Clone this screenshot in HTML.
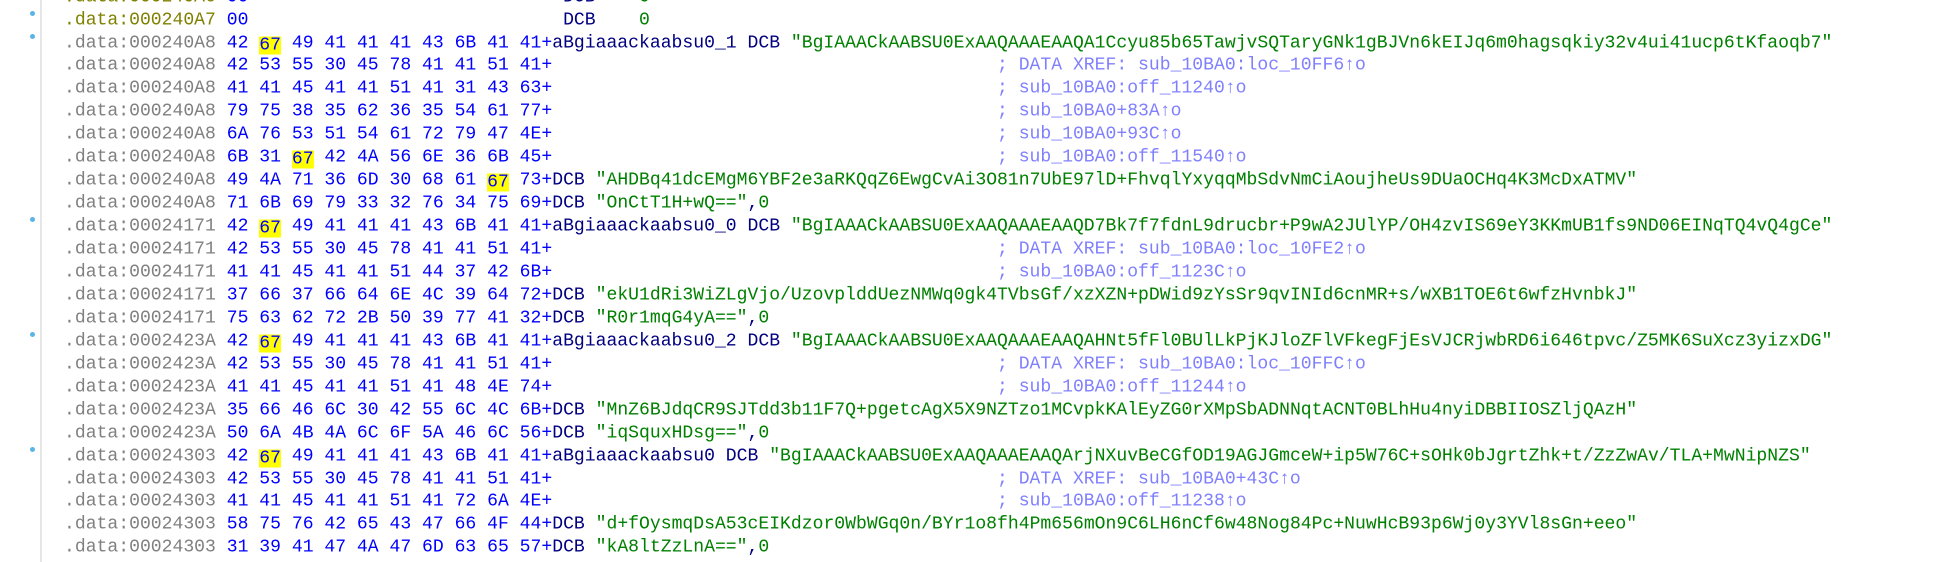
<!DOCTYPE html>
<html><head><meta charset="utf-8"><style>
html,body{margin:0;padding:0;background:#fff;width:1947px;height:562px;overflow:hidden;position:relative}
.g{position:absolute;left:40px;top:0;width:2px;height:562px;background:#e6e6e6}
.l{position:absolute;left:64px;white-space:pre;font-family:"Liberation Mono",monospace;font-size:18.08px;height:23px;line-height:23px;color:#000080;transform:translateY(1.5px)}
.d{position:absolute;left:30px;width:5px;height:5px;border-radius:50%;background:#5ab4e6}
.a{color:#808080}.o{color:#808000}.h{color:#0000ff}.s{color:#008000}.c{color:#8080ff}
.y{background:#ffff00;display:inline-block;line-height:18px;height:18px;vertical-align:-2px}
</style></head><body>
<div class="g"></div>
<div class="l" style="top:-15.5px"><span class="o">.data:000240A6</span> <span class="h">00</span>                             DCB    <span class="s">0</span></div>
<div class="d" style="top:11px"></div>
<div class="l" style="top:7.5px"><span class="o">.data:000240A7</span> <span class="h">00</span>                             DCB    <span class="s">0</span></div>
<div class="d" style="top:33.5px"></div>
<div class="l" style="top:30.5px"><span class="a">.data:000240A8</span> <span class="h">42 <span class="y">67</span> 49 41 41 41 43 6B 41 41+</span>aBgiaaackaabsu0_1 DCB <span class="s">"BgIAAACkAABSU0ExAAQAAAEAAQA1Ccyu85b65TawjvSQTaryGNk1gBJVn6kEIJq6m0hagsqkiy32v4ui41ucp6tKfaoqb7"</span></div>
<div class="l" style="top:53.4px"><span class="a">.data:000240A8</span> <span class="h">42 53 55 30 45 78 41 41 51 41+</span>                                         <span class="c">; DATA XREF: sub_10BA0:loc_10FF6↑o</span></div>
<div class="l" style="top:76.4px"><span class="a">.data:000240A8</span> <span class="h">41 41 45 41 41 51 41 31 43 63+</span>                                         <span class="c">; sub_10BA0:off_11240↑o</span></div>
<div class="l" style="top:99.3px"><span class="a">.data:000240A8</span> <span class="h">79 75 38 35 62 36 35 54 61 77+</span>                                         <span class="c">; sub_10BA0+83A↑o</span></div>
<div class="l" style="top:122.3px"><span class="a">.data:000240A8</span> <span class="h">6A 76 53 51 54 61 72 79 47 4E+</span>                                         <span class="c">; sub_10BA0+93C↑o</span></div>
<div class="l" style="top:145.2px"><span class="a">.data:000240A8</span> <span class="h">6B 31 <span class="y">67</span> 42 4A 56 6E 36 6B 45+</span>                                         <span class="c">; sub_10BA0:off_11540↑o</span></div>
<div class="l" style="top:168.2px"><span class="a">.data:000240A8</span> <span class="h">49 4A 71 36 6D 30 68 61 <span class="y">67</span> 73+</span>DCB <span class="s">"AHDBq41dcEMgM6YBF2e3aRKQqZ6EwgCvAi3O81n7UbE97lD+FhvqlYxyqqMbSdvNmCiAoujheUs9DUaOCHq4K3McDxATMV"</span></div>
<div class="l" style="top:191.1px"><span class="a">.data:000240A8</span> <span class="h">71 6B 69 79 33 32 76 34 75 69+</span>DCB <span class="s">"OnCtT1H+wQ=="</span>,<span class="s">0</span></div>
<div class="d" style="top:217px"></div>
<div class="l" style="top:214px"><span class="a">.data:00024171</span> <span class="h">42 <span class="y">67</span> 49 41 41 41 43 6B 41 41+</span>aBgiaaackaabsu0_0 DCB <span class="s">"BgIAAACkAABSU0ExAAQAAAEAAQD7Bk7f7fdnL9drucbr+P9wA2JUlYP/OH4zvIS69eY3KKmUB1fs9ND06EINqTQ4vQ4gCe"</span></div>
<div class="l" style="top:237px"><span class="a">.data:00024171</span> <span class="h">42 53 55 30 45 78 41 41 51 41+</span>                                         <span class="c">; DATA XREF: sub_10BA0:loc_10FE2↑o</span></div>
<div class="l" style="top:259.9px"><span class="a">.data:00024171</span> <span class="h">41 41 45 41 41 51 44 37 42 6B+</span>                                         <span class="c">; sub_10BA0:off_1123C↑o</span></div>
<div class="l" style="top:282.9px"><span class="a">.data:00024171</span> <span class="h">37 66 37 66 64 6E 4C 39 64 72+</span>DCB <span class="s">"ekU1dRi3WiZLgVjo/UzovplddUezNMWq0gk4TVbsGf/xzXZN+pDWid9zYsSr9qvINId6cnMR+s/wXB1TOE6t6wfzHvnbkJ"</span></div>
<div class="l" style="top:305.8px"><span class="a">.data:00024171</span> <span class="h">75 63 62 72 2B 50 39 77 41 32+</span>DCB <span class="s">"R0r1mqG4yA=="</span>,<span class="s">0</span></div>
<div class="d" style="top:331.8px"></div>
<div class="l" style="top:328.8px"><span class="a">.data:0002423A</span> <span class="h">42 <span class="y">67</span> 49 41 41 41 43 6B 41 41+</span>aBgiaaackaabsu0_2 DCB <span class="s">"BgIAAACkAABSU0ExAAQAAAEAAQAHNt5fFl0BUlLkPjKJloZFlVFkegFjEsVJCRjwbRD6i646tpvc/Z5MK6SuXcz3yizxDG"</span></div>
<div class="l" style="top:351.7px"><span class="a">.data:0002423A</span> <span class="h">42 53 55 30 45 78 41 41 51 41+</span>                                         <span class="c">; DATA XREF: sub_10BA0:loc_10FFC↑o</span></div>
<div class="l" style="top:374.7px"><span class="a">.data:0002423A</span> <span class="h">41 41 45 41 41 51 41 48 4E 74+</span>                                         <span class="c">; sub_10BA0:off_11244↑o</span></div>
<div class="l" style="top:397.6px"><span class="a">.data:0002423A</span> <span class="h">35 66 46 6C 30 42 55 6C 4C 6B+</span>DCB <span class="s">"MnZ6BJdqCR9SJTdd3b11F7Q+pgetcAgX5X9NZTzo1MCvpkKAlEyZG0rXMpSbADNNqtACNT0BLhHu4nyiDBBIIOSZljQAzH"</span></div>
<div class="l" style="top:420.6px"><span class="a">.data:0002423A</span> <span class="h">50 6A 4B 4A 6C 6F 5A 46 6C 56+</span>DCB <span class="s">"iqSquxHDsg=="</span>,<span class="s">0</span></div>
<div class="d" style="top:446.5px"></div>
<div class="l" style="top:443.5px"><span class="a">.data:00024303</span> <span class="h">42 <span class="y">67</span> 49 41 41 41 43 6B 41 41+</span>aBgiaaackaabsu0 DCB <span class="s">"BgIAAACkAABSU0ExAAQAAAEAAQArjNXuvBeCGfOD19AGJGmceW+ip5W76C+sOHk0bJgrtZhk+t/ZzZwAv/TLA+MwNipNZS"</span></div>
<div class="l" style="top:466.5px"><span class="a">.data:00024303</span> <span class="h">42 53 55 30 45 78 41 41 51 41+</span>                                         <span class="c">; DATA XREF: sub_10BA0+43C↑o</span></div>
<div class="l" style="top:489.4px"><span class="a">.data:00024303</span> <span class="h">41 41 45 41 41 51 41 72 6A 4E+</span>                                         <span class="c">; sub_10BA0:off_11238↑o</span></div>
<div class="l" style="top:512.4px"><span class="a">.data:00024303</span> <span class="h">58 75 76 42 65 43 47 66 4F 44+</span>DCB <span class="s">"d+fOysmqDsA53cEIKdzor0WbWGq0n/BYr1o8fh4Pm656mOn9C6LH6nCf6w48Nog84Pc+NuwHcB93p6Wj0y3YVl8sGn+eeo"</span></div>
<div class="l" style="top:535.3px"><span class="a">.data:00024303</span> <span class="h">31 39 41 47 4A 47 6D 63 65 57+</span>DCB <span class="s">"kA8ltZzLnA=="</span>,<span class="s">0</span></div>
</body></html>
